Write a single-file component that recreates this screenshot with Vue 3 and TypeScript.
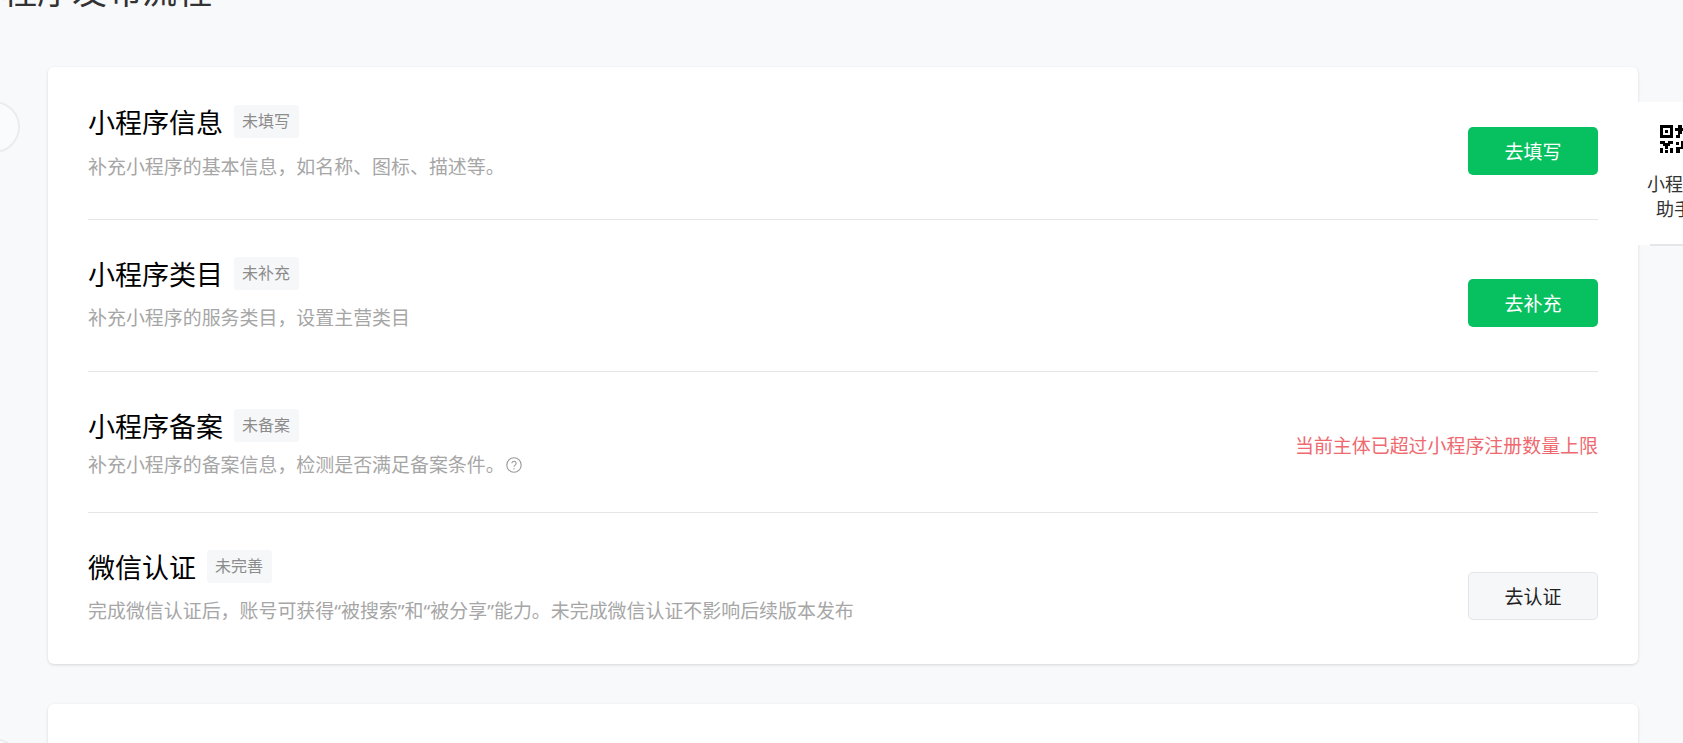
<script setup lang="ts">
interface Step {
  title: string
  tag: string
  desc: string
  action: string
  kind: 'primary' | 'plain' | 'warn'
  help?: boolean
  compact?: boolean
}

const steps: Step[] = [
  { title: '小程序信息', tag: '未填写', desc: '补充小程序的基本信息，如名称、图标、描述等。', action: '去填写', kind: 'primary' },
  { title: '小程序类目', tag: '未补充', desc: '补充小程序的服务类目，设置主营类目', action: '去补充', kind: 'primary' },
  { title: '小程序备案', tag: '未备案', desc: '补充小程序的备案信息，检测是否满足备案条件。', action: '当前主体已超过小程序注册数量上限', kind: 'warn', help: true, compact: true },
  { title: '微信认证', tag: '未完善', desc: '完成微信认证后，账号可获得“被搜索”和“被分享”能力。未完成微信认证不影响后续版本发布', action: '去认证', kind: 'plain' }
]

const marks = Array.from({ length: 108 }, (_, i) => i)
</script>

<template>
  <div class="page">
    <h1 class="heading">小程序发布流程</h1>

    <section class="card">
      <div v-for="step in steps" :key="step.title" class="row" :class="{ compact: step.compact }">
        <div class="info">
          <div class="head">
            <span class="title">{{ step.title }}</span>
            <span class="tag">{{ step.tag }}</span>
          </div>
          <p class="desc">
            {{ step.desc }}
            <svg v-if="step.help" class="help" viewBox="0 0 16 16" width="16" height="16" aria-hidden="true">
              <circle cx="8" cy="8" r="7.2" fill="none" stroke="#9a9a9a" stroke-width="1.1" />
              <path d="M5.9 6.3a2.1 2.1 0 1 1 3.2 1.8c-.8.5-1.1.9-1.1 1.7" fill="none" stroke="#9a9a9a" stroke-width="1.1" />
              <circle cx="8" cy="11.8" r=".7" fill="#9a9a9a" />
            </svg>
          </p>
        </div>
        <span v-if="step.kind === 'warn'" class="warn">{{ step.action }}</span>
        <button v-else class="btn" :class="step.kind">{{ step.action }}</button>
      </div>
    </section>

    <section class="card next"></section>

    <span class="dot first"></span>
    <span class="dot second"></span>

    <aside class="helper">
      <svg class="qr" viewBox="0 0 28 28" width="28" height="28" aria-hidden="true">
        <path fill-rule="evenodd" d="M0 0h13v13H0zM3 3v7h7V3zM5 5h3v3H5z" fill="#000" />
        <path d="M18 0h4v3h4v3h-4v3h-2v4h-4v-3h2V6h-3V3h3z" fill="#000" />
        <path d="M24 8h4v5h-4z" fill="#000" />
        <path d="M0 16h5v2h3v-2h5v3h-3v2H8v3H5v-3H3v-2H0z" fill="#000" />
        <path d="M0 23h3v5H0zM5 25h3v3H5zM10 23h3v5h-3z" fill="#000" />
        <path d="M16 17h3v3h-3zM21 16h7v5h-4v3h-4v4h-4v-6h5z" fill="#000" />
        <path d="M24 25h4v3h-4z" fill="#000" />
      </svg>
      <span class="helper-text">小程序<br />助手</span>
    </aside>

    <div class="watermarks" aria-hidden="true">
      <span v-for="n in marks" :key="n">9FwNCJ</span>
    </div>
  </div>
</template>

<style>
html,
body {
  margin: 0;
  background: #f8f9fb;
  overflow: hidden;
}
</style>

<style scoped>
.page {
  position: relative;
  box-sizing: border-box;
  height: 743px;
  overflow: hidden;
  padding: 0 45px 0 48px;
  background: #f8f9fb;
  font-family: "Noto Sans", "Noto Sans CJK SC", sans-serif;
}

.heading {
  margin: -34px 0 51px -81px;
  font-size: 35px;
  line-height: 50px;
  font-weight: 400;
  color: #333;
  white-space: nowrap;
}

.card {
  padding: 0 40px;
  background: #fff;
  border-radius: 6px;
  box-shadow: 0 1px 3px rgba(0, 0, 0, 0.14);
}

.next {
  height: 120px;
  margin-top: 40px;
}

.row {
  display: flex;
  justify-content: space-between;
  align-items: flex-start;
  height: 152px;
  padding-top: 37px;
  box-sizing: border-box;
  border-bottom: 1px solid #e5e6e8;
}

.row:first-child {
  height: 153px;
  padding-top: 38px;
}

.row:first-child .desc {
  margin-top: 15px;
}

.row:last-child {
  border-bottom: 0;
  height: 151px;
}

.row.compact {
  height: 141px;
}

.head {
  display: flex;
  align-items: center;
  height: 33px;
}

.title {
  padding-top: 2px;
  font-size: 27px;
  line-height: 33px;
  color: #000;
}

.tag {
  margin-left: 11px;
  padding: 0 9px 0 8px;
  height: 33px;
  line-height: 33px;
  font-size: 16px;
  color: #8c8c8c;
  background: #f6f7f9;
  border-radius: 3px;
}

.desc {
  display: flex;
  align-items: center;
  gap: 1px;
  margin: 14px 0 0;
  font-size: 18.95px;
  line-height: 28px;
  color: #a6a6a6;
}

.compact .desc {
  margin-top: 9px;
}

.btn {
  box-sizing: border-box;
  width: 130px;
  height: 48px;
  margin-top: 22px;
  padding: 0;
  border: 1px solid transparent;
  border-radius: 5px;
  font-family: inherit;
  font-size: 19px;
}

.primary {
  background: #07c160;
  color: #fff;
}

.plain {
  background: #f6f7f9;
  border-color: #e3e4e6;
  color: #222;
}

.warn {
  margin-top: 23px;
  font-size: 18.95px;
  line-height: 28px;
  color: #ee6a70;
}

.dot {
  position: absolute;
  left: -32px;
  width: 48px;
  height: 48px;
  border: 2px solid #ebecee;
  border-radius: 50%;
  background: #fafbfc;
}

.first {
  top: 101px;
}

.second {
  top: 738px;
}

.helper {
  position: absolute;
  top: 102px;
  left: 1638px;
  display: flex;
  flex-direction: column;
  align-items: center;
  box-sizing: border-box;
  width: 72px;
  height: 143px;
  padding-top: 23px;
  background: #fff;
}

.helper::after {
  content: "";
  position: absolute;
  left: 12px;
  right: 0;
  bottom: -1px;
  height: 2px;
  background: #e5e6e8;
}

.qr {
  display: block;
}

.helper-text {
  margin-top: 19px;
  font-size: 18px;
  line-height: 25px;
  color: #333;
  text-align: center;
}

.watermarks {
  position: absolute;
  top: 6px;
  left: -25px;
  display: grid;
  grid-template-columns: repeat(10, 185px);
  grid-auto-rows: 63px;
  pointer-events: none;
  font-size: 22px;
  line-height: 28px;
  color: rgba(0, 0, 0, 0.014);
}
</style>
